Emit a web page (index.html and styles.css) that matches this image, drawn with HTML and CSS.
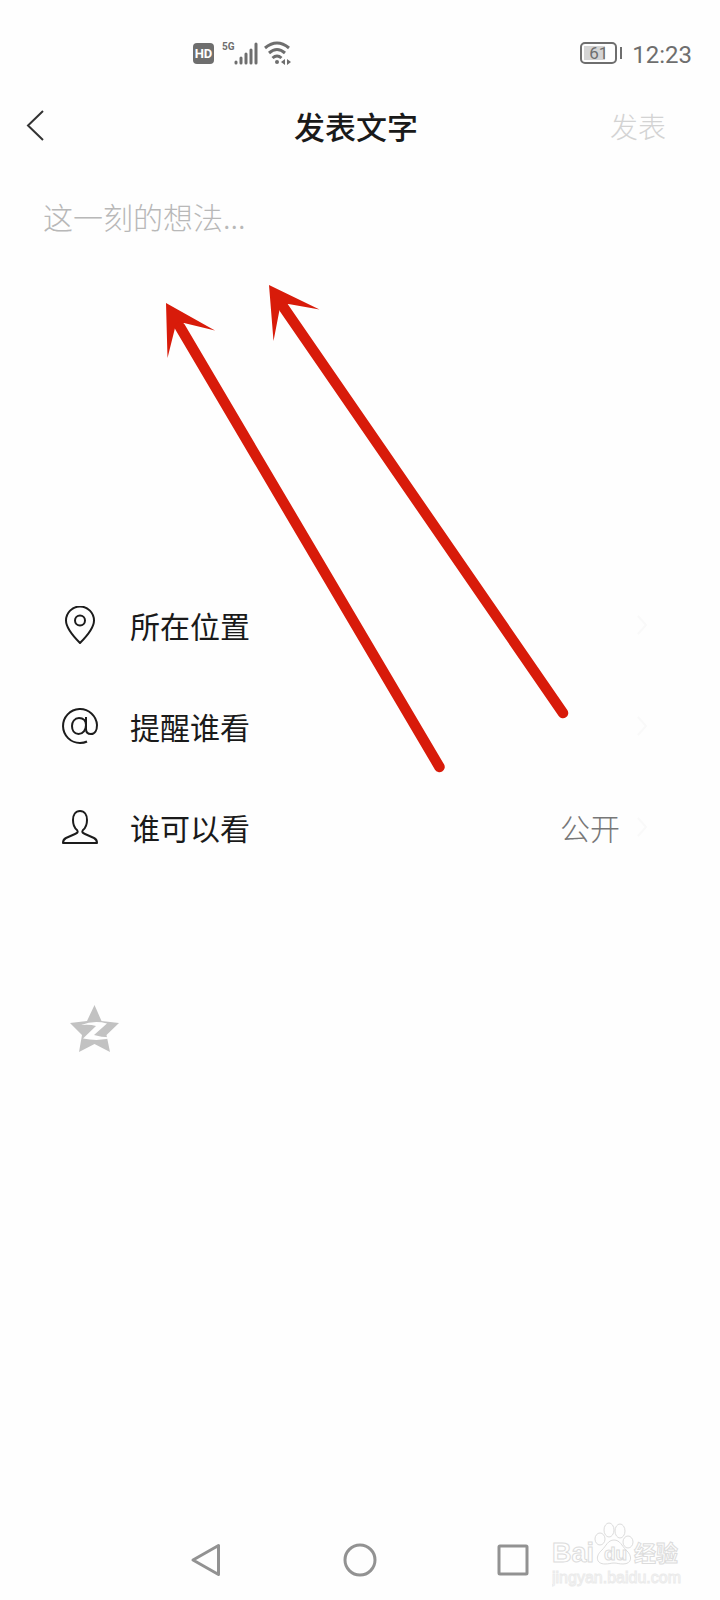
FILE: index.html
```html
<!DOCTYPE html>
<html lang="zh-CN">
<head>
<meta charset="utf-8">
<meta name="viewport" content="width=device-width, initial-scale=1">
<title>发表文字</title>
<link rel="stylesheet" href="styles.css">
</head>
<body>
<div class="screen">
  <div class="status">
    <div class="signals">
      <span class="hd">HD</span>
      <span class="net">5G</span>
      <svg class="bars" width="24" height="24" viewBox="0 0 24 24" stroke="#6e6e6e" stroke-width="3" stroke-linecap="round"><path d="M2 22v-1M7 22v-5M12 22v-9M17 22V9M22 22V3"/></svg>
      <svg class="wifi" width="28" height="24" viewBox="0 0 28 24" fill="none" stroke="#6e6e6e" stroke-width="3"><path d="M1 7Q13-3 25 7M5 12Q13 5 21 12M8.500 17Q13 13 17.500 17"/><circle cx="13" cy="21" r="2" fill="#6e6e6e" stroke="none"/><path d="M21 18v6l-4-3zM23 18v6l4-3z" fill="#6e6e6e" stroke="none"/></svg>
    </div>
    <div class="power">
      <span class="battery"><span class="level">61</span></span>
      <span class="battery-cap"></span>
      <time class="clock">12:23</time>
    </div>
  </div>

  <header class="header">
    <button class="back" aria-label="返回"><svg width="18" height="32" viewBox="0 0 18 32" fill="none" stroke="#333" stroke-width="2"><path d="M17 1 2 15.500 17 30"/></svg></button>
    <h1 class="title">发表文字</h1>
    <button class="publish">发表</button>
  </header>

  <main class="content">
    <textarea class="editor" aria-label="这一刻的想法" placeholder="这一刻的想法..."></textarea>

    <div class="options">
      <button class="option">
        <svg class="option-icon" width="38" height="38" viewBox="0 0 38 38" fill="none" stroke="#1c1c1c" stroke-width="2"><path d="M19 37C13 31 5 22 5 14.500a14 14 0 0 1 28 0C33 22 25 31 19 37z"/><circle cx="19" cy="14.500" r="5"/></svg>
        <span class="option-label">所在位置</span>
        <svg class="chevron" width="12" height="20" viewBox="0 0 12 20" fill="none" stroke="#f9f9f9" stroke-width="2"><path d="m2 1 8 9-8 9"/></svg>
      </button>
      <button class="option">
        <svg class="option-icon" width="38" height="38" viewBox="0 0 38 38" fill="none" stroke="#1c1c1c" stroke-width="2"><path d="M26 34.500Q23 36 19 36A17 17 0 1 1 36 18c0 5-2 9-6 9-3.500 0-5-2-5-5V10"/><path d="M25 18c0 5-3 9-7.500 9S11 23 11 19s2.500-8 7-8 7 3 7 7z"/></svg>
        <span class="option-label">提醒谁看</span>
        <svg class="chevron" width="12" height="20" viewBox="0 0 12 20" fill="none" stroke="#f9f9f9" stroke-width="2"><path d="m2 1 8 9-8 9"/></svg>
      </button>
      <button class="option">
        <svg class="option-icon" width="38" height="38" viewBox="0 0 38 38" fill="none" stroke="#1c1c1c" stroke-width="2" stroke-linejoin="round"><path d="M16 22c-2.500-2-4-6-4-10 0-5 2.500-9 7-9s7 4 7 9c0 4-1.500 8-4 10-1.500 2-.5 3 2 4l9 4c3 1.500 3 3 3 5H2c0-2 0-3.500 3-5l9-4c2.500-1 3.500-2 2-4z"/></svg>
        <span class="option-label">谁可以看</span>
        <span class="option-value">公开</span>
        <svg class="chevron" width="12" height="20" viewBox="0 0 12 20" fill="none" stroke="#f9f9f9" stroke-width="2"><path d="m2 1 8 9-8 9"/></svg>
      </button>
    </div>

    <button class="qzone" aria-label="同步到QQ空间">
      <svg width="50" height="48" viewBox="0 0 50 48"><path fill="#c2c2c2" d="m24.500 0 7 16L49 18 36.500 30l3.500 17-15.500-8L9 47l3-17L0 18l17-2z"/><path fill="#fefefe" d="M11 20q13-5 26-1.500L24 30q10 3 20 2-14 5-31 1.500L26 21q-6-2-15-1z"/></svg>
    </button>
  </main>

  <nav class="navbar">
    <button class="nav-key" aria-label="后退"><svg width="34" height="34" viewBox="0 0 34 34"><path d="M28.500 2.500v29L3 17z"/></svg></button>
    <button class="nav-key" aria-label="主页"><svg width="34" height="34" viewBox="0 0 34 34"><circle cx="17" cy="17" r="15"/></svg></button>
    <button class="nav-key" aria-label="最近任务"><svg width="34" height="34" viewBox="0 0 34 34"><rect x="3" y="3" width="28" height="28" rx="1"/></svg></button>
  </nav>

  <svg class="arrows" width="412" height="492" viewBox="162 283 412 492" fill="#d81b0a" stroke="#d81b0a" aria-hidden="true">
    <path stroke="none" d="m166 303 49 27.500-31-7.500-9 5-7.500 30z"/>
    <path stroke-width="10.500" stroke-linecap="round" d="m180 327 259.500 440"/>
    <path stroke="none" d="m269 285 50.500 24.500-31-5.500-9 6-6 31z"/>
    <path stroke-width="10.500" stroke-linecap="round" d="m284 308 279 405"/>
  </svg>

  <svg class="watermark" width="130" height="66" viewBox="0 0 130 66" fill="#fefefe" stroke="#dcdcdc" aria-label="Baidu经验">
    <ellipse cx="48" cy="17" rx="5" ry="6"/><ellipse cx="57" cy="8" rx="5" ry="7"/><ellipse cx="68" cy="9" rx="5" ry="7"/><ellipse cx="76" cy="20" rx="5" ry="6"/>
    <path d="M62 18c-6 0-8 6-12 10-7 6-6 14 3 14 4 0 6-1 9-1s5 1 9 1c9 0 10-8 3-14-4-4-6-10-12-10z"/>
    <text class="mark-brand" x="0" y="40">Bai</text>
    <text class="mark-du" x="52" y="38">du</text>
    <text class="mark-cjk" x="82" y="39">经验</text>
    <text class="mark-url" x="0" y="61">jingyan.baidu.com</text>
  </svg>
</div>
</body>
</html>
```

FILE: styles.css
```css
* { box-sizing: border-box; }

body {
  margin: 0;
  background: #fefefe;
  color: #1a1a1a;
  font-family: "Noto Sans CJK SC", sans-serif;
}

button {
  margin: 0;
  padding: 0;
  border: 0;
  background: none;
  color: inherit;
  font: inherit;
  cursor: pointer;
}

svg { display: block; flex: none; }

.screen {
  position: relative;
  display: flex;
  flex-direction: column;
  min-height: 100vh;
}

.status {
  display: flex;
  justify-content: space-between;
  align-items: center;
  height: 82px;
  padding: 24px 28px 0 193px;
  color: #6e6e6e;
}

.signals,
.power { display: flex; align-items: center; }

.hd {
  width: 21px;
  border-radius: 4px;
  background: #6e6e6e;
  color: #fefefe;
  font: bold 13px/21px Roboto, sans-serif;
  text-align: center;
}

.net {
  align-self: flex-start;
  width: 12px;
  margin-left: 8px;
  font: bold 10px/12px Roboto, sans-serif;
}

.wifi { margin-left: 6px; }

.battery {
  width: 37px;
  padding: 2px;
  border: 2px solid #6e6e6e;
  border-radius: 5px;
}

.level {
  display: block;
  background: linear-gradient(to right, #d4d4d4 21px, transparent 21px);
  font: 17px/14px Roboto, sans-serif;
  text-align: center;
}

.battery-cap {
  width: 2px;
  height: 12px;
  margin-left: 3px;
  background: #6e6e6e;
}

.clock {
  margin-left: 10px;
  padding-top: 4px;
  font: 24px/28px Roboto, sans-serif;
}

.header {
  display: grid;
  grid-template-columns: 1fr auto 1fr;
  align-items: center;
  height: 88px;
  padding: 0 54px 0 26px;
}

.back { justify-self: start; }

.title {
  margin: 0 0 0 20px;
  font-size: 31px;
  line-height: 44px;
  font-weight: 500;
}

.publish {
  justify-self: end;
  color: #d3d3d3;
  font-size: 28px;
  line-height: 44px;
  font-weight: 300;
}

.content { flex: 1; }

.editor {
  display: block;
  width: 100%;
  height: 404px;
  padding: 24px 43px;
  border: 0;
  outline: 0;
  background: none;
  color: inherit;
  font: 300 30px/44px "Noto Sans CJK SC", sans-serif;
  resize: none;
}

.editor::placeholder { color: #b8b8b8; }

.option {
  display: flex;
  align-items: center;
  width: 100%;
  height: 101px;
  padding: 0 72px 0 61px;
  text-align: left;
  font-size: 30px;
  line-height: 44px;
}

.option-label { flex: 1; margin-left: 31px; }

.option-value {
  color: #777;
  font-weight: 300;
}

.chevron { margin-left: 16px; }

.qzone {
  display: block;
  margin: 128px 0 0 70px;
}

.navbar {
  display: flex;
  justify-content: center;
  align-items: center;
  gap: 119px;
  height: 80px;
}

.navbar svg {
  fill: none;
  stroke: #929292;
  stroke-width: 3;
  stroke-linejoin: round;
}

.arrows {
  position: absolute;
  top: 283px;
  left: 162px;
  pointer-events: none;
}

.watermark {
  position: absolute;
  right: 38px;
  bottom: 12px;
  pointer-events: none;
}

.mark-brand { font: bold 27px "Liberation Sans", sans-serif; }
.mark-du { font: bold 19px "Liberation Sans", sans-serif; }
.mark-cjk { font: bold 22px "Noto Sans CJK SC", sans-serif; }

.mark-url {
  font: 16px "Liberation Sans", sans-serif;
  stroke: #ebebeb;
}
```
